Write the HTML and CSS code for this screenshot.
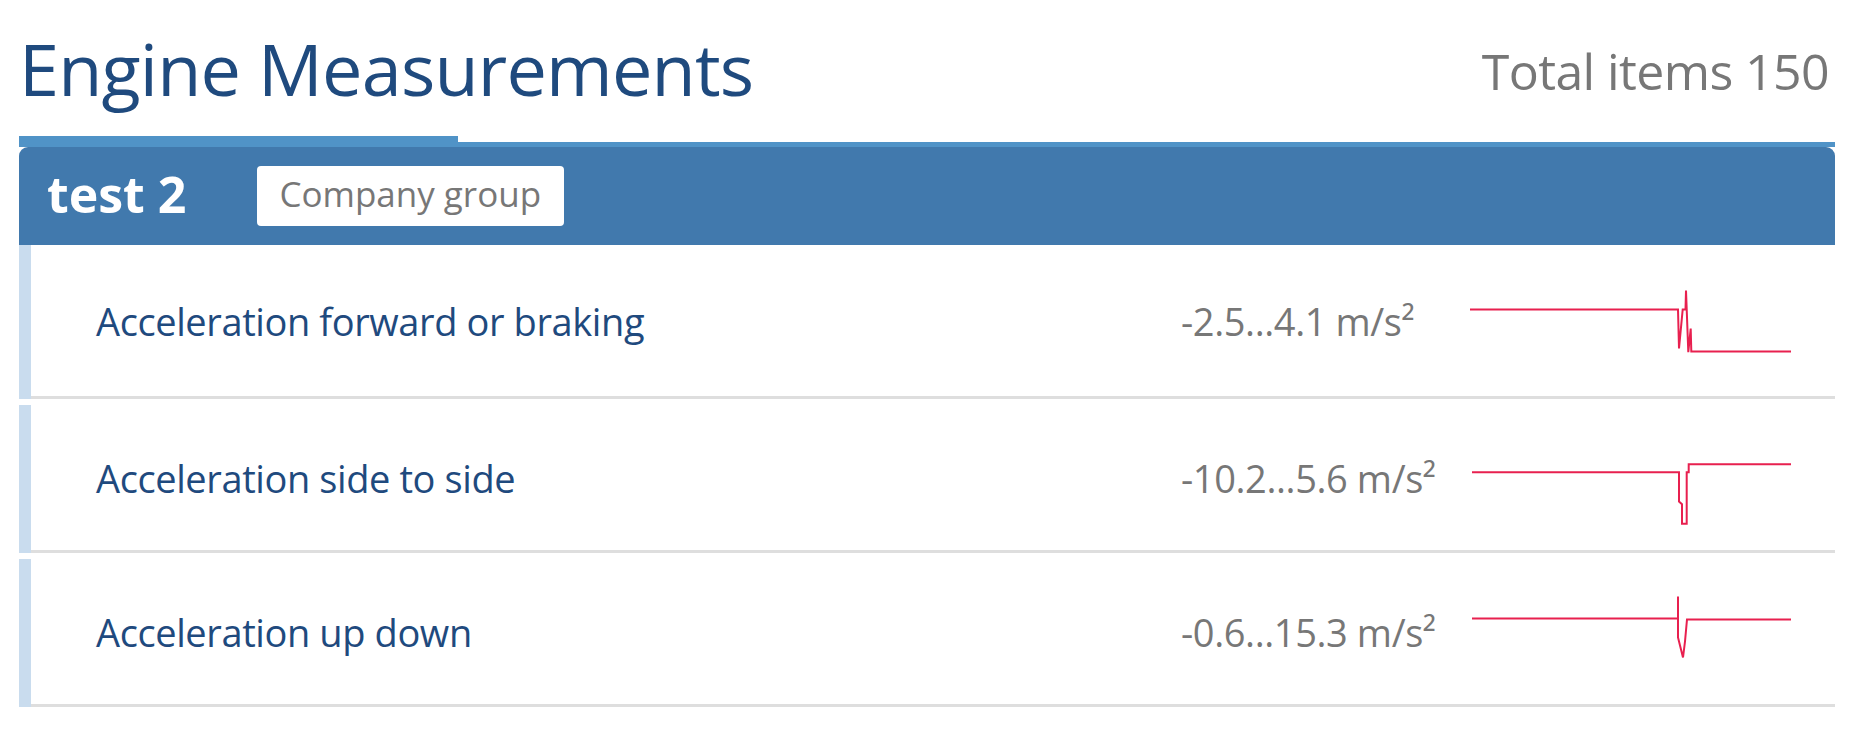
FILE: index.html
```html
<!DOCTYPE html>
<html lang="en">
<head>
    <meta charset="UTF-8">
    <meta name="viewport" content="width=device-width, initial-scale=1.0">
    <title>Engine Measurements</title>
    <link rel="stylesheet" href="styles.css">
</head>
<body>
    <div class="container">
        <div class="page-head">
            <h1>Engine Measurements</h1>
            <div class="total">Total items 150</div>
        </div>

        <div class="tabs">
            <div class="tab active"></div>
            <div class="tab-rest"></div>
        </div>

        <div class="group-head">
            <span class="group-name">test 2</span>
            <span class="badge">Company group</span>
        </div>

        <div class="list">
            <div class="row first">
                <div class="row-body">
                    <div class="label">Acceleration forward or braking</div>
                    <div class="value">-2.5...4.1 m/s²</div>
                    <svg class="spark" width="322" height="100" viewBox="0 0 322 100">
                        <polyline points="0,38.5 208,38.5 209,77.5 212.7,38.5 215.5,38.5 216,19.5 218.3,81.2 220.7,57.5 221.3,80.5 321,80.5"/>
                    </svg>
                </div>
            </div>

            <div class="row">
                <div class="row-body">
                    <div class="label">Acceleration side to side</div>
                    <div class="value">-10.2...5.6 m/s²</div>
                    <svg class="spark" width="322" height="100" viewBox="0 0 322 100">
                        <polyline points="2,44.2 209,44.2 209,73.5 212,76.2 212,95.8 216.7,95.8 216.7,44.2 218.7,44.2 218.7,36.2 321,36.2"/>
                    </svg>
                </div>
            </div>

            <div class="row">
                <div class="row-body">
                    <div class="label">Acceleration up down</div>
                    <div class="value">-0.6...15.3 m/s²</div>
                    <svg class="spark" width="322" height="100" viewBox="0 0 322 100">
                        <polyline points="2,36.5 208,36.5 208,14.5 208,55.5 213,75.5 215,59.5 217,37.5 321,37.5"/>
                    </svg>
                </div>
            </div>
        </div>
    </div>
</body>
</html>
```

FILE: styles.css
```css
* {
    box-sizing: border-box;
    margin: 0;
    padding: 0;
    font-family: 'Open Sans', 'Noto Sans', sans-serif;
}
body {
    background: white;
}
.container {
    padding: 0 19px;
}
.page-head {
    display: flex;
    justify-content: space-between;
    align-items: center;
    height: 136px;
}
h1 {
    font-size: 72px;
    font-weight: normal;
    letter-spacing: -0.8px;
    color: #1f4a7e;
}
.total {
    font-size: 50px;
    letter-spacing: -0.6px;
    color: #777;
    margin-top: 6px;
    padding-right: 6px;
}
.tabs {
    display: flex;
    align-items: flex-end;
    height: 11px;
}
.tab {
    width: 439px;
    height: 11px;
    background: #5093c7;
}
.tab-rest {
    flex: 1;
    height: 5px;
    background: #5093c7;
}
.group-head {
    display: flex;
    align-items: center;
    height: 98px;
    padding-left: 28px;
    background: #4179ad;
    border-radius: 9px 9px 0 0;
}
.group-name {
    font-size: 50px;
    font-weight: bold;
    color: white;
    margin-top: -5px;
}
.badge {
    margin-left: 71px;
    height: 60px;
    line-height: 56px;
    padding: 0 23px 0 22px;
    font-size: 35px;
    color: #777;
    background: white;
    border-radius: 4px;
}
.row {
    border-left: 12px solid #c9dcee;
}
.row + .row {
    margin-top: 6px;
}
.row-body {
    display: flex;
    align-items: center;
    height: 148px;
    padding: 0 43px 0 65px;
    border-bottom: 3px solid #dedede;
}
.row.first .row-body {
    height: 154px;
}
.label {
    flex: 1;
    font-size: 38px;
    letter-spacing: -0.4px;
    color: #1f4a7e;
}
.value {
    width: 289px;
    font-size: 38px;
    letter-spacing: -0.4px;
    color: #777;
}
.spark polyline {
    fill: none;
    stroke: #e8204f;
    stroke-width: 2;
}
```
